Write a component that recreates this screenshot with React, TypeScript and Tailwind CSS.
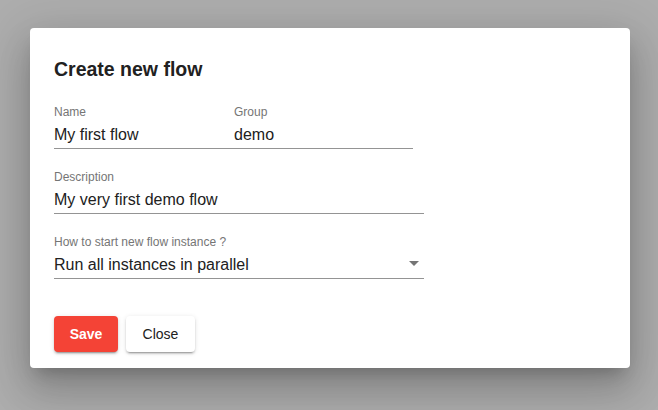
import React from 'react';

const font = { fontFamily: '"Liberation Sans", Arial, sans-serif' };

function Field({
  label,
  value,
  className = '',
  select = false,
}: {
  label: string;
  value: string;
  className?: string;
  select?: boolean;
}) {
  return (
    <div className={className}>
      <div className="text-xs leading-[14px] text-[#757575]">{label}</div>
      <div className="flex items-center justify-between border-b border-[#949494] pt-[6px] pb-[4px]">
        <span className="text-base leading-[19px] text-[#212121]">{value}</span>
        {select && (
          <svg width="10" height="5" viewBox="0 0 10 5" className="mr-[5px] -mt-[2px]">
            <path d="M0 0 L10 0 L5 5 Z" fill="#757575" />
          </svg>
        )}
      </div>
    </div>
  );
}

export default function App() {
  return (
    <div className="flex h-screen w-full items-start bg-[#adadad] pl-[30px] pt-[28px]" style={font}>
      <div className="w-[600px] rounded-[4px] bg-white px-6 pt-[25px] pb-4 shadow-[0_11px_15px_-7px_rgba(0,0,0,0.2),0_24px_38px_3px_rgba(0,0,0,0.14),0_9px_46px_8px_rgba(0,0,0,0.12)]">
        <h2 className="text-[19.5px] font-bold leading-[32px] text-[#212121]">Create new flow</h2>

        <div className="mt-[20px] flex w-[359px]">
          <Field label="Name" value="My first flow" className="w-[180px]" />
          <Field label="Group" value="demo" className="flex-1" />
        </div>

        <Field label="Description" value="My very first demo flow" className="mt-[21px] w-[370px]" />

        <Field
          label="How to start new flow instance ?"
          value="Run all instances in parallel"
          className="mt-[21px] w-[370px]"
          select
        />

        <div className="mt-[37px] flex gap-2">
          <button className="h-9 w-16 rounded-[4px] bg-[#f44336] text-sm font-bold text-white shadow-[0_3px_1px_-2px_rgba(0,0,0,0.2),0_2px_2px_0_rgba(0,0,0,0.14),0_1px_5px_0_rgba(0,0,0,0.12)]">
            Save
          </button>
          <button className="h-9 w-[69px] rounded-[4px] bg-white text-sm text-[#212121] shadow-[0_3px_1px_-2px_rgba(0,0,0,0.2),0_2px_2px_0_rgba(0,0,0,0.14),0_1px_5px_0_rgba(0,0,0,0.12)]">
            Close
          </button>
        </div>
      </div>
    </div>
  );
}
